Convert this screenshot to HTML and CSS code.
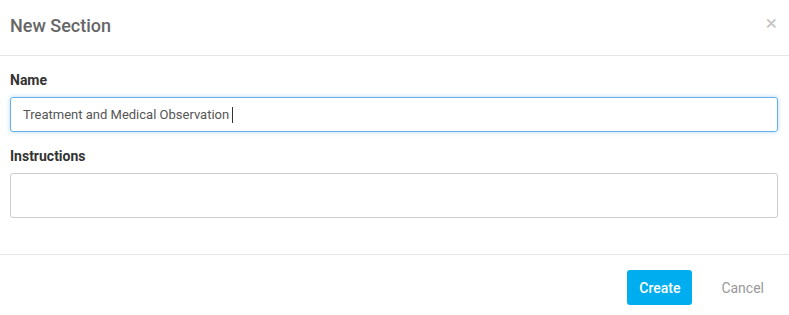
FILE: index.html
```html
<!DOCTYPE html>
<html>
<head>
<meta charset="utf-8">
<link rel="stylesheet" href="styles.css">
</head>
<body>
<div class="modal">
  <div class="modal-header">
    <h4 class="modal-title">New Section</h4>
    <span class="close">&times;</span>
  </div>
  <div class="modal-body">
    <div class="form-group">
      <label class="label">Name</label>
      <div class="input focused">Treatment and Medical Observation <span class="caret"></span></div>
    </div>
    <div class="form-group">
      <label class="label">Instructions</label>
      <div class="textarea"></div>
    </div>
  </div>
  <div class="modal-footer">
    <button class="btn btn-primary">Create</button>
    <button class="btn btn-link">Cancel</button>
  </div>
</div>
</body>
</html>
```
FILE: styles.css
```css
html, body {
  margin: 0;
  padding: 0;
  background: #fff;
  font-family: Roboto, "Liberation Sans", sans-serif;
}
.modal {
  width: 789px;
  height: 315px;
  box-sizing: border-box;
}
.modal-header {
  height: 55px;
  border-bottom: 1px solid #e5e5e5;
  display: flex;
  align-items: center;
  justify-content: space-between;
  padding: 0 12px 0 10px;
}
.modal-title {
  margin: 0;
  font-size: 18px;
  font-weight: 500;
  color: #666;
  margin-top: -5px;
}
.close {
  font-size: 21px;
  color: #c4c4c4;
  line-height: 1;
  margin-top: -9px;
}
.modal-body {
  padding: 16px 11px 36px 10px;
  display: flex;
  flex-direction: column;
  gap: 16px;
}
.form-group {
  display: flex;
  flex-direction: column;
  gap: 9px;
}
.label {
  font-size: 14px;
  font-weight: 700;
  color: #333;
  line-height: 16px;
}
.input, .textarea {
  box-sizing: border-box;
  border: 1px solid #ccc;
  border-radius: 3px;
  font-size: 13px;
  color: #555;
  padding: 0 12px;
}
.input {
  height: 35px;
  display: flex;
  align-items: center;
}
.input.focused {
  border-color: #66afe9;
  box-shadow: 0 0 4px rgba(102, 175, 233, 0.5);
}
.caret {
  display: inline-block;
  width: 1px;
  height: 16px;
  background: #333;
  margin-left: 3px;
}
.textarea {
  height: 45px;
}
.modal-footer {
  border-top: 1px solid #e5e5e5;
  display: flex;
  justify-content: flex-end;
  align-items: center;
  padding: 15px 13px 0 0;
  gap: 17px;
}
.btn {
  font-family: Roboto, "Liberation Sans", sans-serif;
  font-size: 14px;
  border: none;
  border-radius: 3px;
  height: 35px;
  cursor: pointer;
}
.btn-primary {
  background: #00aeef;
  color: #fff;
  width: 65px;
  font-weight: 500;
}
.btn-link {
  background: none;
  color: #999;
  padding: 0 12px;
}
```
